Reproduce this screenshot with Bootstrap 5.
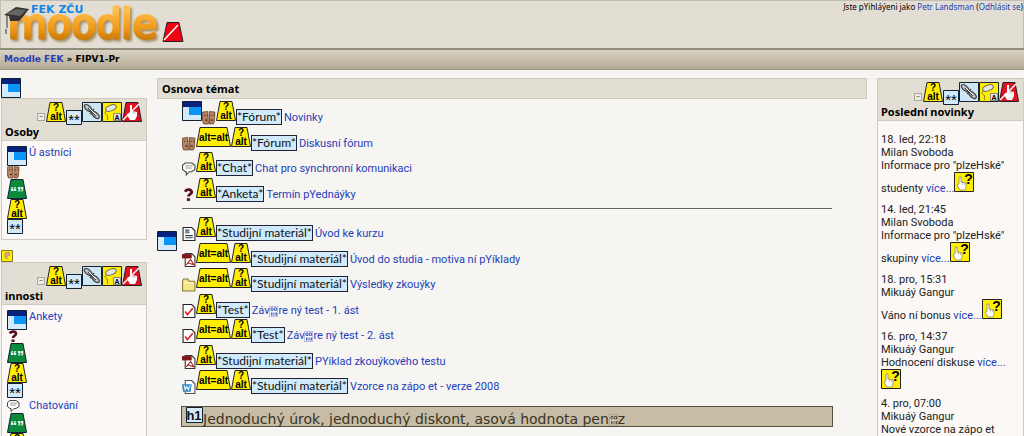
<!DOCTYPE html>
<html lang="cs">
<head>
<meta charset="utf-8">
<meta name="viewport" content="width=device-width, initial-scale=1">
<title>Moodle FEK: FIPV1-Pr</title>
<link href="https://cdn.jsdelivr.net/npm/bootstrap@5.3.0/dist/css/bootstrap.min.css" rel="stylesheet">
<style>
body{background:#f6f5f1;color:#222;font:11px/13px Roboto,sans-serif;height:100vh;overflow:hidden}
a{color:#2340b8;text-decoration:none}
a:hover{text-decoration:underline}
svg{flex:none}
.site-head{background:#e2ded3;border:1px solid #c3beb2;border-bottom:0;height:48px}
.login-info{font:8px/12px "Noto Sans",sans-serif;white-space:nowrap;color:#000}
.crumbs{background:linear-gradient(#d9d3c5,#b5aa93);border-top:2px solid #918d7d;border-bottom:1px solid #9d937e;height:22px;color:#000;font:bold 9px/18px "DejaVu Sans",sans-serif}
.side{flex:0 0 147px}
.side-left{padding-left:1px}
.content-main{margin:0 2px}
.bold-title{font:bold 11px/14px "Noto Sans",sans-serif;color:#000;margin:0}
.block{border:1px solid #cfcabf;background:#fcf8f5}
.block-head{background:#e2ded3;border-bottom:1px solid #cfcabf;height:42px;padding-left:3px}
.block-tools{height:22px;padding:3px 4px 0 0}
.fold{width:8px;height:8px;border:1px solid #aaa699;background:#eeebe4;line-height:4px;font-size:8px;color:#555;margin:11px 1px 0 0}
.stars{margin-top:8px}
.topic-head{background:#e2ded3;border:1px solid #cfcabf;height:21px;padding-top:3px}
.activity{height:26px;white-space:nowrap}
.activity:nth-child(2n+3){height:25px}
.lift{margin-bottom:4px}
.kind{border:1px solid #223;background:#cfeafb;color:#111;font:12px/14px Lato,sans-serif;height:16px}
.row-link{margin-left:2px;padding-bottom:1px}
.rule{border-top:1px solid #66645e;margin:6px 35px 6px 25px}
.topic-gutter{flex:0 0 25px}
.section-title{background:#c7bda7;border:1px solid #55503f;height:21px;color:#3b3424;font:14px/24px "DejaVu Sans",sans-serif;margin:12px 34px 0 -1px;white-space:nowrap}
.news p{margin:0 0 8px}
.news svg{vertical-align:baseline}
.news{padding:12px 3px 0 3px}
.block-body{padding:5px 4px 4px 5px}
.icon-stack{width:20px}
.side-link{padding:0 0 0 2px}
svg text{font-family:"Liberation Sans",sans-serif;font-weight:bold}
svg .brand{font:bold 11px "DejaVu Sans",sans-serif}
svg .word{font:40px "DejaVu Sans",sans-serif;filter:drop-shadow(2px 2px 1px #a58f68)}
</style>
</head>
<body>
<svg width="0" height="0" class="position-absolute" aria-hidden="true">
<symbol id="win" viewBox="0 0 20 20"><path fill="#d3eafc" stroke="#123" d="M.5.5h19v19H.5z"/><path fill="#06227c" d="M1 1h18v5H1z"/><path fill="#0a95f8" d="M7 6h12v8H7z"/></symbol>
<symbol id="alt" viewBox="0 0 20 20"><path fill="#ffee00" stroke="#222" d="M4 .5h12l3.500 19H.5z"/><text x="10" y="9" font-size="10" text-anchor="middle">?</text><text x="10" y="18" font-size="10" text-anchor="middle">alt</text></symbol>
<symbol id="altalt" viewBox="0 0 35 20"><path fill="#ffee00" stroke="#222" d="M4 .5h27l3.500 19H.5z"/><text x="17.500" y="14" font-size="10" text-anchor="middle">alt=alt</text></symbol>
<symbol id="star" viewBox="0 0 16 16"><path fill="#d3eafc" stroke="#123" d="M.5.5h15v14H.5z"/><text x="8" y="15" font-size="15" style="font-weight:400" text-anchor="middle">**</text></symbol>
<symbol id="chain" viewBox="0 0 20 20"><path fill="#cfe6f6" stroke="#123" d="M.5.5h19v19H.5z"/><g fill="#c8ccd0" stroke="#444" stroke-width="1.300"><ellipse cx="6" cy="6" rx="4.500" ry="2.300" transform="rotate(42 6 6)"/><ellipse cx="13.500" cy="13" rx="4.500" ry="2.300" transform="rotate(42 13.500 13)"/><path d="M6 6l8 8M8 12l4-5"/></g><path stroke="#fff" d="M7 6l7 7"/></symbol>
<symbol id="mouse" viewBox="0 0 20 20"><path fill="#ffee00" stroke="#222" d="M.5.5h19v19H.5z"/><path fill="none" stroke="#7d7a30" d="M5 8c-3 2-2 4 0 5s-1 3 1 5"/><ellipse cx="9" cy="6" rx="5.500" ry="2.800" fill="#e8e8d8" stroke="#666" transform="rotate(-20 9 6)"/><path fill="#e6e6e6" stroke="#888" d="M11.500 11.500h7v7h-7z"/><text x="15" y="18" font-size="7" text-anchor="middle">A</text></symbol>
<symbol id="nohand" viewBox="0 0 20 20"><path fill="#e01020" stroke="#222" d="M4 .5h12l3.500 19H.5z"/><path stroke="#fff" stroke-width="1.500" d="M1 18L17 2"/><path fill="#fff" d="M8 3h2v6l5 1v4l-2 4H8l-3-5 1-2 2 1z"/><path stroke="#b99" stroke-width=".6" d="M11 9v3M13 10v2"/></symbol>
<symbol id="quote" viewBox="0 0 20 20"><path fill="#0c8a3c" stroke="#123" d="M4 .5h12l3.500 19H.5z"/><text x="10" y="18" font-size="14" fill="#fff" text-anchor="middle">“”</text></symbol>
<symbol id="forum" viewBox="0 0 13 13"><path fill="#b98461" stroke="#5b3a28" stroke-width=".7" d="M.5 1l5-.5.5 11.500H1.500L.5 9zM7 .5l5 .5-.5 9-1 2H7z"/><path stroke="#3b2418" d="M2 4h1M4.500 4h1M8 4h1M10.500 4h1M3 8.500h2M8 8.500h2"/></symbol>
<symbol id="ask" viewBox="0 0 13 13"><path fill="none" stroke="#5a0d22" stroke-width="2.600" d="M3 3.500C4 .8 9.500 1 9 4c-.3 1.800-3 1.800-3 4"/><path fill="#5a0d22" d="M4.500 9.500h3V12h-3z"/></symbol>
<symbol id="chat" viewBox="0 0 13 13"><path fill="#fff" stroke="#444" d="M3 1h6l3 2v4L9 9H7l-3 3V9H3L.5 7V3z"/><path stroke="#999" d="M3 3.500h7M3 5.500h6"/></symbol>
<symbol id="page" viewBox="0 0 13 13"><path fill="#fff" stroke="#222" d="M1 .5h8l3 3v9H1z"/><path stroke="#33475c" d="M3 3h4M3 5h4M3 8h7M3 10h7"/><path fill="#6f8aa0" d="M3 2h3v4H3z"/></symbol>
<symbol id="pdf" viewBox="0 0 13 13"><path fill="#fff" stroke="#333" d="M3 .5h6l3 3v9H3z"/><path fill="#80151b" d="M0 1h9v4H0z"/><path fill="none" stroke="#b02020" d="M4 11l4-5 3 5-6-2"/></symbol>
<symbol id="folder" viewBox="0 0 13 13"><path fill="#f3e58b" stroke="#8a7a35" d="M.5 3l1-2h4l1 2h5l.5 1v8H.5z"/><path stroke="#fffbd0" d="M1.500 4.500h9"/></symbol>
<symbol id="test" viewBox="0 0 13 13"><path fill="#fff" stroke="#222" d="M1 .5h8l3 3v9H1z"/><path fill="none" stroke="#d22" stroke-width="1.500" d="M3 7l2 3 5-6"/></symbol>
<symbol id="doc" viewBox="0 0 13 13"><path fill="#fff" stroke="#456" d="M3 .5h6l3 3v9H3z"/><path fill="#2a86c0" d="M0 4h9l-1 7H1z"/><path fill="none" stroke="#fff" d="M2 5l1 4 1.500-3L6 9l1.500-4"/></symbol>
<symbol id="helphand" viewBox="0 0 20 20"><path fill="#ffee00" stroke="#222" d="M.5.5h19v19H.5z"/><path fill="#fff" stroke="#777" stroke-width=".7" d="M5 5h2v5l5 1v4l-1 3H6l-3-5 2-1z"/><path stroke="#999" stroke-width=".6" d="M8.500 10v3M10.500 11v2"/><text x="14.500" y="12" font-size="14" text-anchor="middle">?</text></symbol>
<symbol id="odd" viewBox="0 0 9 11"><path fill="#fff" fill-opacity=".35" stroke="currentColor" stroke-width=".5" stroke-opacity=".6" d="M.5.5h8v10h-8z"/><path fill="none" stroke="currentColor" stroke-width=".8" d="M2 2h2v2.500H2zM5.500 2h2v2.500h-2zM2.500 6.500v3M4 6.500v3M6 6.500v3M7.500 6.500v3"/></symbol>
</svg>

<header class="site-head d-flex justify-content-between">
<svg width="190" height="46" viewBox="0 0 190 46" role="img" aria-label="FEK ZČU moodle">
<defs><linearGradient id="gold" x1="0" y1="0" x2="0" y2="1"><stop offset=".2" stop-color="#ffbe4a"/><stop offset=".6" stop-color="#f09818"/><stop offset="1" stop-color="#b06805"/></linearGradient></defs>
<text class="word" x="7" y="37" fill="url(#gold)" stroke="url(#gold)" stroke-width="3" stroke-linejoin="round">moodle</text>
<path fill="#333" d="M3 14L15 6l13 2-7 9-3 3H9l-1-5z"/><path fill="#666" d="M5 13l10-5 10 1-6 6z"/><path stroke="#333" fill="none" d="M6 14v13M5 28v5"/>
<text class="brand" x="30" y="12" fill="#1585e8">FEK ZČU</text>
<path fill="#f00010" stroke="#222" d="M166 21.500h12l4 19h-20z"/><path stroke="#fff" stroke-width="1.500" d="M163 39l14-15"/></svg>
<div class="login-info">Jste pYihláýeni jako <a href="#">Petr Landsman</a> (<a href="#">Odhlásit se</a>)</div>
</header>
<nav class="crumbs ps-1" aria-label="Navigace"><a href="#">Moodle FEK</a> » FIPV1-Pr</nav>

<div class="d-flex align-items-start pt-2 gap-2">
<aside class="side side-left">
<svg class="d-block" width="20" height="20"><use href="#win"/></svg>
<section class="block">
<div class="block-head">
<div class="block-tools d-flex justify-content-end align-items-start"><button type="button" class="fold p-0" aria-label="Sbalit">−</button><svg width="20" height="20"><use href="#alt"/></svg><svg class="stars" width="16" height="16"><use href="#star"/></svg><svg width="20" height="20"><use href="#chain"/></svg><svg width="20" height="20"><use href="#mouse"/></svg><svg width="20" height="20"><use href="#nohand"/></svg></div>
<h2 class="bold-title pt-1">Osoby</h2>
</div>
<div class="d-flex block-body">
<div class="icon-stack d-flex flex-column"><svg width="20" height="20"><use href="#win"/></svg><svg width="13" height="13"><use href="#forum"/></svg><svg width="20" height="20"><use href="#quote"/></svg><svg width="20" height="20"><use href="#alt"/></svg><svg width="16" height="16"><use href="#star"/></svg></div>
<a href="#" class="side-link">Ú astníci</a>
</div>
</section>
<svg class="d-block mt-2" width="12" height="14" viewBox="0 0 12 14"><path fill="#ffee00" stroke="#887a20" d="M.5 2.500h11v11H.5z"/><path fill="#e7a2a0" stroke="#777" stroke-width=".5" d="M4 5l4-1 1 3-3 1v3L4 9z"/></svg>
<section class="block">
<div class="block-head">
<div class="block-tools d-flex justify-content-end align-items-start"><button type="button" class="fold p-0" aria-label="Sbalit">−</button><svg width="20" height="20"><use href="#alt"/></svg><svg class="stars" width="16" height="16"><use href="#star"/></svg><svg width="20" height="20"><use href="#chain"/></svg><svg width="20" height="20"><use href="#mouse"/></svg><svg width="20" height="20"><use href="#nohand"/></svg></div>
<h2 class="bold-title pt-1">innosti</h2>
</div>
<div class="d-flex block-body pb-0">
<div class="icon-stack d-flex flex-column"><svg width="20" height="20"><use href="#win"/></svg><svg width="13" height="13"><use href="#ask"/></svg><svg width="20" height="20"><use href="#quote"/></svg><svg width="20" height="20"><use href="#alt"/></svg><svg width="16" height="16"><use href="#star"/></svg></div>
<a href="#" class="side-link">Ankety</a>
</div>
<div class="d-flex block-body pt-0">
<div class="icon-stack d-flex flex-column"><svg width="13" height="14"><use href="#chat"/></svg><svg width="20" height="20"><use href="#quote"/></svg><svg width="20" height="20"><use href="#alt"/></svg><svg width="16" height="16"><use href="#star"/></svg></div>
<a href="#" class="side-link">Chatování</a>
</div>
</section>
</aside>

<main class="flex-grow-1 content-main">
<div class="topic-head px-1"><h1 class="bold-title">Osnova témat</h1></div>
<div class="d-flex">
<div class="topic-gutter"></div>
<div>
<div class="activity d-flex align-items-end"><svg class="lift" width="20" height="20"><use href="#win"/></svg><svg width="14" height="14"><use href="#forum"/></svg><svg class="lift" width="20" height="20"><use href="#alt"/></svg><span class="kind">*Fórum*</span><a class="row-link" href="#">Novinky</a></div>
<div class="activity d-flex align-items-end"><svg width="14" height="14"><use href="#forum"/></svg><svg class="lift" width="35" height="20"><use href="#altalt"/></svg><svg class="lift" width="20" height="20"><use href="#alt"/></svg><span class="kind">*Fórum*</span><a class="row-link" href="#">Diskusní fórum</a></div>
<div class="activity d-flex align-items-end"><svg width="14" height="14"><use href="#chat"/></svg><svg class="lift" width="20" height="20"><use href="#alt"/></svg><span class="kind">*Chat*</span><a class="row-link" href="#">Chat pro synchronní komunikaci</a></div>
<div class="activity d-flex align-items-end"><svg width="14" height="14"><use href="#ask"/></svg><svg class="lift" width="20" height="20"><use href="#alt"/></svg><span class="kind">*Anketa*</span><a class="row-link" href="#">Termín pYednáýky</a></div>
</div>
</div>
<div class="rule"></div>
<div class="d-flex">
<div class="topic-gutter pt-3"><svg width="20" height="20"><use href="#win"/></svg></div>
<div class="flex-grow-1">
<div class="activity d-flex align-items-end"><svg width="14" height="14"><use href="#page"/></svg><svg class="lift" width="20" height="20"><use href="#alt"/></svg><span class="kind">*Studijní materiál*</span><a class="row-link" href="#">Úvod ke kurzu</a></div>
<div class="activity d-flex align-items-end"><svg width="14" height="14"><use href="#pdf"/></svg><svg class="lift" width="35" height="20"><use href="#altalt"/></svg><svg class="lift" width="20" height="20"><use href="#alt"/></svg><span class="kind">*Studijní materiál*</span><a class="row-link" href="#">Úvod do studia - motiva ní pYíklady</a></div>
<div class="activity d-flex align-items-end"><svg width="14" height="14"><use href="#folder"/></svg><svg class="lift" width="35" height="20"><use href="#altalt"/></svg><svg class="lift" width="20" height="20"><use href="#alt"/></svg><span class="kind">*Studijní materiál*</span><a class="row-link" href="#">Výsledky zkouýky</a></div>
<div class="activity d-flex align-items-end"><svg width="14" height="14"><use href="#test"/></svg><svg class="lift" width="20" height="20"><use href="#alt"/></svg><span class="kind">*Test*</span><a class="row-link" href="#">Záv<svg width="9" height="11"><use href="#odd"/></svg>re ný test - 1. ást</a></div>
<div class="activity d-flex align-items-end"><svg width="14" height="14"><use href="#test"/></svg><svg class="lift" width="35" height="20"><use href="#altalt"/></svg><svg class="lift" width="20" height="20"><use href="#alt"/></svg><span class="kind">*Test*</span><a class="row-link" href="#">Záv<svg width="9" height="11"><use href="#odd"/></svg>re ný test - 2. ást</a></div>
<div class="activity d-flex align-items-end"><svg width="14" height="14"><use href="#pdf"/></svg><svg class="lift" width="20" height="20"><use href="#alt"/></svg><span class="kind">*Studijní materiál*</span><a class="row-link" href="#">PYíklad zkouýkového testu</a></div>
<div class="activity d-flex align-items-end"><svg width="14" height="14"><use href="#doc"/></svg><svg class="lift" width="35" height="20"><use href="#altalt"/></svg><svg class="lift" width="20" height="20"><use href="#alt"/></svg><span class="kind">*Studijní materiál*</span><a class="row-link" href="#">Vzorce na zápo et - verze 2008</a></div>
<h2 class="section-title d-flex ps-1"><svg width="17" height="17" viewBox="0 0 17 17"><path fill="#d3eafc" stroke="#123" d="M.5.5h16v15H.5z"/><text x="8" y="13" font-size="13" fill="#111" text-anchor="middle">h1</text></svg><span>Jednoduchý úrok, jednoduchý diskont, asová hodnota pen<svg width="9" height="12"><use href="#odd"/></svg>z</span></h2>
</div>
</div>
</main>

<aside class="side">
<section class="block">
<div class="block-head">
<div class="block-tools d-flex justify-content-end align-items-start"><button type="button" class="fold p-0" aria-label="Sbalit">−</button><svg width="20" height="20"><use href="#alt"/></svg><svg class="stars" width="16" height="16"><use href="#star"/></svg><svg width="20" height="20"><use href="#chain"/></svg><svg width="20" height="20"><use href="#mouse"/></svg><svg width="20" height="20"><use href="#nohand"/></svg></div>
<h2 class="bold-title pt-1">Poslední novinky</h2>
</div>
<div class="news">
<p>18. led, 22:18<br>Milan Svoboda<br>Informace pro "plzeHské"<br>studenty <a href="#">více...</a><svg width="20" height="20"><use href="#helphand"/></svg></p>
<p>14. led, 21:45<br>Milan Svoboda<br>Informace pro "plzeHské"<br>skupiny <a href="#">více...</a><svg width="20" height="20"><use href="#helphand"/></svg></p>
<p>18. pro, 15:31<br>Mikuáý Gangur<br>Váno ní bonus <a href="#">více...</a><svg width="20" height="20"><use href="#helphand"/></svg></p>
<p>16. pro, 14:37<br>Mikuáý Gangur<br>Hodnocení diskuse <a href="#">více...</a><svg class="d-block" width="20" height="20"><use href="#helphand"/></svg></p>
<p>4. pro, 07:00<br>Mikuáý Gangur<br>Nové vzorce na zápo et <a href="#">více...</a></p>
</div>
</section>
</aside>
</div>
<script src="https://cdn.jsdelivr.net/npm/bootstrap@5.3.0/dist/js/bootstrap.bundle.min.js"></script>
</body>
</html>
